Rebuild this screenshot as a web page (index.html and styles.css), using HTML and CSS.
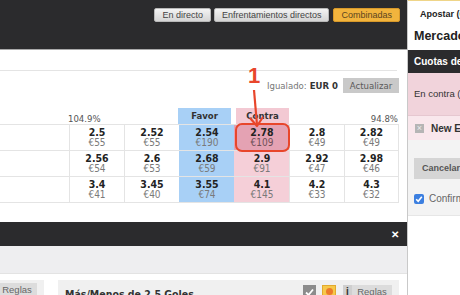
FILE: index.html
```html
<!DOCTYPE html>
<html>
<head>
  <meta charset="UTF-8">
  <title>Mercado</title>
  <link rel="stylesheet" href="styles.css">
</head>
<body>
<div class="page">
  <div class="main">
    <div class="topbar">
      <span class="nav">En directo</span>
      <span class="nav">Enfrentamientos directos</span>
      <span class="nav on">Combinadas</span>
    </div>

    <div class="market">
      <div class="strip"></div>
      <div class="matched">
        <span class="m-label">Igualado:</span>
        <span class="m-value">EUR 0</span>
        <span class="refresh">Actualizar</span>
      </div>

      <div class="lhead">
        <div></div>
        <div class="pct left">104.9%</div>
        <div></div>
        <div class="colhead back">Favor</div>
        <div class="colhead lay">Contra</div>
        <div></div>
        <div class="pct right">94.8%</div>
      </div>

      <div class="ladder">
        <div class="lrow">
          <div class="runner"></div>
          <div class="cell"><b>2.5</b><span>€55</span></div>
          <div class="cell"><b>2.52</b><span>€55</span></div>
          <div class="cell back"><b>2.54</b><span>€190</span></div>
          <div class="cell lay hot"><b>2.78</b><span>€109</span></div>
          <div class="cell"><b>2.8</b><span>€49</span></div>
          <div class="cell last"><b>2.82</b><span>€49</span></div>
        </div>
        <div class="lrow">
          <div class="runner"></div>
          <div class="cell"><b>2.56</b><span>€54</span></div>
          <div class="cell"><b>2.6</b><span>€53</span></div>
          <div class="cell back"><b>2.68</b><span>€59</span></div>
          <div class="cell lay"><b>2.9</b><span>€91</span></div>
          <div class="cell"><b>2.92</b><span>€47</span></div>
          <div class="cell last"><b>2.98</b><span>€46</span></div>
        </div>
        <div class="lrow">
          <div class="runner"></div>
          <div class="cell"><b>3.4</b><span>€41</span></div>
          <div class="cell"><b>3.45</b><span>€40</span></div>
          <div class="cell back"><b>3.55</b><span>€74</span></div>
          <div class="cell lay"><b>4.1</b><span>€145</span></div>
          <div class="cell"><b>4.2</b><span>€33</span></div>
          <div class="cell last"><b>4.3</b><span>€32</span></div>
        </div>
      </div>

      <!-- annotation drawn over the ladder -->
      <svg class="callout" width="407" height="172" viewBox="0 0 407 172">
        <text x="248" y="33" class="callout-num">1</text>
        <line x1="254" y1="40" x2="257" y2="75" stroke="#e8462b" stroke-width="2.2"/>
        <polyline points="250,68 257,76 263,67" fill="none" stroke="#e8462b" stroke-width="2.2" stroke-linejoin="round"/>
        <rect x="236" y="74" width="53" height="27" rx="6" fill="none" stroke="#e8462b" stroke-width="2"/>
      </svg>
    </div>

    <div class="bar2"><span class="close">✕</span></div>
    <div class="graybar"></div>

    <div class="cards">
      <div class="card card-a">
        <div class="chead"><span class="rules">Reglas</span></div>
      </div>
      <div class="card card-b">
        <div class="chead">
          <span class="ctitle">Más/Menos de 2,5 Goles</span>
          <span class="ic ic-check">
            <svg width="13" height="12" viewBox="0 0 13 12"><polyline points="3,6.5 5.5,9 10,3.5" fill="none" stroke="#fff" stroke-width="1.8"/></svg>
          </span>
          <span class="ic ic-star"><i></i></span>
          <span class="ic ic-info">i</span>
          <span class="rules">Reglas</span>
        </div>
      </div>
    </div>
  </div>

  <div class="slip">
    <div class="slip-tab">Apostar (0)</div>
    <div class="slip-title">Mercados</div>
    <div class="slip-head">Cuotas de apuesta</div>
    <div class="slip-pink">En contra (Apostar en contra)</div>
    <div class="slip-row"><span class="xbox">×</span><span class="sel">New England</span></div>
    <div class="slip-foot">
      <div class="cancel">Cancelar todas</div>
      <div class="confirm">
        <span class="cbox">
          <svg width="10" height="10" viewBox="0 0 10 10"><polyline points="2.2,5.2 4.2,7.2 7.8,2.8" fill="none" stroke="#fff" stroke-width="1.6"/></svg>
        </span>
        <span>Confirmar apuestas</span>
      </div>
    </div>
  </div>
</div>
</body>
</html>
```

FILE: styles.css
```css
* {
	box-sizing: border-box;
}
body {
	margin: 0;
	width: 460px;
	height: 295px;
	overflow: hidden;
	background: #fff;
	font-family: "Liberation Sans", Arial, sans-serif;
}
.page {
	display: flex;
	height: 295px;
}
.main {
	width: 407px;
	flex: none;
	display: flex;
	flex-direction: column;
}

/* top navigation */
.topbar {
	height: 50px;
	flex: none;
	background: #2b2b2d;
	border-bottom: 1px solid #a9a9a9;
	display: flex;
	justify-content: flex-end;
	align-items: flex-start;
	gap: 3px;
	padding: 8px 7px 0 0;
}
.nav {
	height: 14px;
	padding: 0 7px;
	font-size: 9px;
	line-height: 12px;
	color: #444;
	background: linear-gradient(#f3f3f3, #d5d5d5);
	border: 1px solid #b8b8b8;
	border-radius: 2px;
	white-space: nowrap;
}
.nav.on {
	margin-left: 1px;
	background: #f2b43d;
	border-color: #d8992a;
	color: #5b4520;
}

/* market ladder */
.market {
	height: 172px;
	flex: none;
	position: relative;
	padding-right: 8px;
	font-family: "DejaVu Sans Condensed", "DejaVu Sans", Tahoma, sans-serif;
}
.strip {
	height: 21px;
	border-bottom: 1px solid #e4e4e4;
	margin-right: 2px;
}
.matched {
	margin-top: 7px;
	height: 15px;
	display: flex;
	justify-content: flex-end;
	align-items: center;
	font-size: 9.5px;
}
.m-label {
	color: #777;
}
.m-value {
	margin-left: 3px;
	font-weight: bold;
	color: #333;
}
.refresh {
	margin-left: 5px;
	width: 56px;
	height: 15px;
	line-height: 15px;
	text-align: center;
	background: #c9c9c9;
	color: #5a5a5a;
}
.lhead,
.lrow {
	display: grid;
	grid-template-columns: 69px repeat(6, 55px);
}
.lhead {
	margin-top: 15px;
	height: 16px;
}
.pct {
	align-self: end;
	font-size: 9.5px;
	line-height: 10px;
	color: #555;
}
.pct.left {
	margin-left: -1px;
}
.pct.right {
	text-align: right;
	padding-right: 1px;
}
.colhead {
	font-size: 9.5px;
	font-weight: bold;
	color: #333;
	text-align: center;
	line-height: 16px;
}
.colhead.back {
	background: #a8d0f6;
	margin: 0 3px 0 -1px;
}
.colhead.lay {
	background: #f3c9d3;
	margin-left: 2px;
}
.ladder {
	border-top: 1px solid #e4e4e4;
}
.lrow {
	height: 26px;
	border-bottom: 1px solid #e4e4e4;
}
.cell {
	border-left: 1px solid #e4e4e4;
	display: flex;
	flex-direction: column;
	align-items: center;
	justify-content: center;
	line-height: 10.5px;
}
.cell.last {
	border-right: 1px solid #e4e4e4;
}
.cell b {
	font-size: 10.5px;
	color: #222;
}
.cell span {
	font-size: 10px;
	color: #7a7a7a;
}
.cell.back {
	background: #a8d0f6;
	border-left-color: #a8d0f6;
}
.cell.lay {
	background: #f5cfd8;
	border-left-color: #f5cfd8;
}
.cell.hot {
	background: #e4a2b3;
	border-left-color: #e4a2b3;
}
.cell.hot span {
	color: #6f5058;
}
.callout {
	position: absolute;
	left: 0;
	top: 0;
}
.callout-num {
	font-family: "Liberation Sans", Arial, sans-serif;
	font-size: 22px;
	font-weight: bold;
	fill: #e8462b;
}

/* lower panels */
.bar2 {
	height: 24px;
	flex: none;
	background: #2b2b2d;
	display: flex;
	justify-content: flex-end;
	align-items: center;
	padding-right: 8px;
}
.close {
	color: #fff;
	font-size: 10px;
	font-weight: bold;
}
.graybar {
	height: 28px;
	flex: none;
	background: #eeeef0;
	border-bottom: 1px solid #e3e3e3;
}
.cards {
	display: flex;
	gap: 14px;
	padding-top: 6px;
}
.card-a {
	width: 64px;
	margin-left: -20px;
}
.card-b {
	width: 341px;
}
.chead {
	height: 22px;
	background: #f0f0f0;
	display: flex;
	align-items: flex-start;
	padding: 5px 7px 0 7px;
}
.card-a .chead {
	justify-content: flex-end;
	padding-top: 3px;
}
.rules {
	flex: none;
	width: 40px;
	height: 14px;
	line-height: 14px;
	text-align: center;
	font-size: 9.5px;
	color: #666;
	background: #dcdcdc;
}
.ctitle {
	flex: 1;
	font-size: 10.5px;
	font-weight: bold;
	color: #333;
	padding-top: 3px;
	white-space: nowrap;
	font-family: "DejaVu Sans Condensed", "DejaVu Sans", sans-serif;
}
.ic {
	flex: none;
	height: 13px;
	display: flex;
	align-items: center;
	justify-content: center;
}
.ic-check {
	width: 13px;
	background: #8c8c8c;
}
.ic-star {
	width: 14px;
	margin-left: 6px;
	background: #f6c84a;
	border: 1px solid #e2aa2e;
}
.ic-star i {
	width: 7px;
	height: 7px;
	border-radius: 50%;
	background: #ec7a2a;
}
.ic-info {
	width: 9px;
	margin-left: 7px;
	background: #cfcfcf;
	font-size: 10px;
	font-weight: bold;
	color: #333;
}

/* bet slip */
.slip {
	width: 53px;
	flex: none;
	border-left: 1px solid #c9c9c9;
	overflow: hidden;
	white-space: nowrap;
	background: #fff;
}
.slip-tab {
	height: 22px;
	padding: 8px 0 0 12px;
	font-size: 9px;
	line-height: 11px;
	font-weight: bold;
	color: #222;
	border-top: 1px solid #efd588;
}
.slip-title {
	height: 28px;
	padding: 7px 0 0 6px;
	font-size: 12.5px;
	line-height: 15px;
	font-weight: bold;
	color: #222;
}
.slip-head {
	height: 23px;
	line-height: 23px;
	padding-left: 6px;
	background: #2b2b2d;
	color: #fff;
	font-size: 10px;
	font-weight: bold;
}
.slip-pink {
	height: 42px;
	line-height: 42px;
	padding-left: 6px;
	background: #f1d3db;
	font-size: 9.5px;
	color: #333;
}
.slip-row {
	height: 25px;
	display: flex;
	align-items: center;
	padding-left: 7px;
	background: #f9e7ec;
	border-top: 1px solid #e6c7d0;
}
.xbox {
	flex: none;
	width: 9px;
	height: 9px;
	line-height: 9px;
	text-align: center;
	background: #b5b5b5;
	color: #eee;
	font-size: 9px;
}
.sel {
	flex: none;
	margin-left: 7px;
	font-size: 10px;
	font-weight: bold;
	color: #333;
}
.slip-foot {
	height: 76px;
	padding: 18px 0 0 6px;
	background: #f3f3f3;
	border-bottom: 1px solid #e6e6e6;
}
.cancel {
	width: 100px;
	height: 21px;
	line-height: 21px;
	padding-left: 8px;
	background: #d5d5d5;
	font-size: 9px;
	font-weight: bold;
	color: #555;
}
.confirm {
	margin-top: 14px;
	display: flex;
	align-items: center;
	font-size: 10px;
	color: #666;
}
.cbox {
	flex: none;
	width: 10px;
	height: 10px;
	margin-right: 5px;
	border-radius: 2px;
	background: #3c7fe0;
	display: flex;
}
```
